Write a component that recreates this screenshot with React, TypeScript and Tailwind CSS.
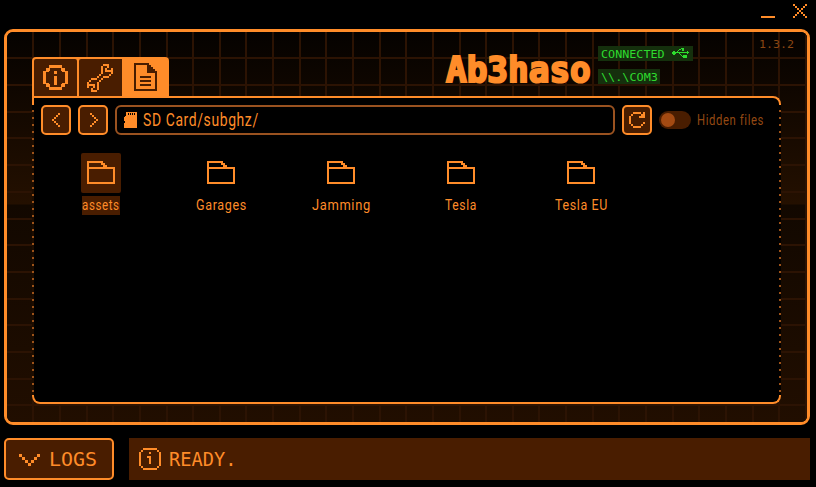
import { useLayoutEffect, useRef, useState, type ReactNode } from "react";

/* Text squeezed or stretched horizontally to fill the width of its box. */
function Fit({ className, children }: { className: string; children: ReactNode }) {
  const box = useRef<HTMLDivElement>(null);
  const text = useRef<HTMLSpanElement>(null);
  const [scale, setScale] = useState(1);
  useLayoutEffect(() => {
    if (box.current && text.current) setScale(box.current.clientWidth / text.current.offsetWidth);
  }, []);
  return (
    <div ref={box} className={`shrink-0 whitespace-pre ${className}`}>
      <span ref={text} className="inline-block origin-left" style={{ transform: `scaleX(${scale})` }}>
        {children}
      </span>
    </div>
  );
}

/* Bitmap icon: every # is one square cell. */
function Pixels({ rows, cell = 2, className = "" }: { rows: string[]; cell?: number; className?: string }) {
  const w = rows[0].length;
  return (
    <svg width={w * cell} height={rows.length * cell} viewBox={`0 0 ${w} ${rows.length}`} shapeRendering="crispEdges" fill="currentColor" className={`shrink-0 ${className}`}>
      {rows.flatMap((r, y) => r.split("").map((c, x) => (c === "#" ? <rect key={`${x}-${y}`} x={x} y={y} width="1" height="1" /> : null)))}
    </svg>
  );
}

const WRENCH = [
  "........###..",
  ".......#..#..",
  ".......#.#..#",
  ".......#.####",
  ".......#....#",
  "......#....#.",
  ".....#..###..",
  "..###..#.....",
  ".#....#......",
  "#....#.......",
  "####.#.......",
  "#..#.#.......",
  "..#..#.......",
  "..###........",
];
const LEFT = ["...#", "..#.", ".#..", "#...", ".#..", "..#.", "...#"];
const RIGHT = ["#...", ".#..", "..#.", "...#", "..#.", ".#..", "#..."];
const DOWN = ["#.....#", ".#...#.", "..#.#..", "...#..."];
const CLOSE = ["#.....#", ".#...#.", "..#.#..", "...#...", "..#.#..", ".#...#.", "#.....#"];
const REFRESH = ["..####.#", ".#....##", "#....###", "#.......", "#.......", "#......#", ".#....#.", "..####.."];
const INFO = [
  "..#######..",
  ".#.......#.",
  "#....#....#",
  "#.........#",
  "#...##....#",
  "#....#....#",
  "#....#....#",
  "#....#....#",
  "#.........#",
  ".#.......#.",
  "..#######..",
];
const USB = [
  ".........###.....",
  ".......##.##.....",
  "......#...##.....",
  ".##..#.........#.",
  "#################",
  "####...#.......#.",
  ".##.....#........",
  ".........#.####..",
  "..........#####..",
  "...........####..",
];

function TabInfo() {
  return (
    <svg width="25" height="25" viewBox="0 0 25 25" fill="currentColor" shapeRendering="crispEdges">
      <path d="M6 0h13v3H6zM6 22h13v3H6zM0 6h3v13H0zM22 6h3v13h-3zM3 3h4v3H6v1H3zM18 3h4v4h-3V6h-1zM3 18h3v1h1v3H3zM19 18h3v4h-4v-3h1zM11 6h3v3h-3zM11 11h3v9h-3z" />
    </svg>
  );
}

function TabFile() {
  return (
    <svg width="23" height="28" viewBox="0 0 23 28" fill="currentColor" shapeRendering="crispEdges">
      <path d="M0 0h15v2h2v2h2v2h2v2h2v20H0zM2 2v24h19V10h-8V2z" fillRule="evenodd" />
      <path d="M6 13h11v2H6zM6 17h11v2H6zM6 21h11v2H6z" />
    </svg>
  );
}

function Folder() {
  return (
    <svg width="28" height="23" viewBox="0 0 28 23" fill="currentColor" shapeRendering="crispEdges">
      <path fillRule="evenodd" d="M0 0h16v2h2v2h2v2h8v17H0zM2 2v4h14V4h-2V2zM2 8v13h24V8z" />
    </svg>
  );
}

function SdCard() {
  return (
    <svg width="13" height="16" viewBox="0 0 13 16" fill="currentColor" shapeRendering="crispEdges">
      <path d="M2 0h11v16H0v-5h1V9H0V5h1V4h1zM4 1v2h1V1zM6 1v2h1V1zM8 1v2h1V1zM10 1v2h1V1z" fillRule="evenodd" />
    </svg>
  );
}

const LINES_X = Array.from({ length: 30 }, (_, i) => Math.round(25.3 + i * 26.64));
const LINES_Y = Array.from({ length: 14 }, (_, i) => Math.round(25.3 + i * 26.7));

const FOLDERS = [
  { name: "assets", w: "w-[38px]", selected: true },
  { name: "Garages", w: "w-[51px]" },
  { name: "Jamming", w: "w-[59px]" },
  { name: "Tesla", w: "w-[32px]" },
  { name: "Tesla EU", w: "w-[53px]" },
];

const SIDE_DOTS =
  "absolute top-[14px] bottom-[9px] w-[2px] bg-[repeating-linear-gradient(to_bottom,#9c5219_0px,#9c5219_2px,transparent_2px,transparent_7px)]";
const TOOL_BUTTON = "flex size-[30px] shrink-0 items-center justify-center rounded-[5px] border-2 border-[#ff8c29] bg-[#491d00]";

export default function App() {
  return (
    <div className="flex h-[487px] w-[816px] flex-col overflow-hidden bg-black font-[Roboto,sans-serif] text-[#ff8c29]">
      <div className="flex h-[29px] shrink-0 items-start justify-end gap-[18px] pt-1 pr-[9px]">
        <div className="mt-3 h-[2px] w-[14px] bg-[#ff8c29]" />
        <Pixels rows={CLOSE} />
      </div>

      <main className="relative isolate mx-1 mr-[6px] flex h-[396px] shrink-0 flex-col overflow-hidden rounded-[9px] border-[3px] border-[#ff8c29]">
        <div className="absolute inset-0 -z-10 bg-[linear-gradient(to_bottom,#050200_0px,#241000_172px,#120800_173px,#210e00_390px)]">
          <svg width="800" height="390" shapeRendering="crispEdges" fill="#2c1303">
            {LINES_X.map((x) => (
              <rect key={x} x={x} y="0" width="2" height="390" />
            ))}
            {LINES_Y.map((y) => (
              <rect key={y} x="0" y={y} width="800" height="2" />
            ))}
          </svg>
        </div>

        <header className="flex h-16 shrink-0 items-start pl-[25px] font-['DejaVu_Sans_Mono',monospace]">
          <nav className="mt-[25px] flex h-[39px] w-[137px] shrink-0 gap-[2px] overflow-hidden rounded-t-[4px] bg-[#ff8c29] pt-[2px] pl-[2px]">
            <div className="flex w-[43px] items-start justify-center rounded-t-[2px] bg-[#491d00] pt-[6px]">
              <TabInfo />
            </div>
            <div className="flex w-[43px] items-start rounded-tl-[2px] bg-[#491d00] pt-[5px] pl-2">
              <Pixels rows={WRENCH} />
            </div>
            <div className="flex flex-1 items-start pt-1 pl-[10px] text-[#491d00]">
              <TabFile />
            </div>
          </nav>
          <Fit className="mt-[16px] ml-[277px] h-[44px] w-[145px] text-[36px] leading-[44px] font-bold [-webkit-text-stroke:2.2px_#ff8c29]">Ab3haso</Fit>
          <div className="ml-[7px] flex flex-col items-start gap-2 pt-[14px] text-[11px] leading-[17px] text-[#2edb2e]">
            <div className="flex h-[15px] w-[95px] bg-[#15300d] pl-[3px]">
              <Fit className="w-[64px]">CONNECTED</Fit>
              <Pixels rows={USB} cell={1} className="mt-[2px] ml-[7px]" />
            </div>
            <div className="h-[15px] w-[62px] bg-[#15300d] pl-[3px]">
              <Fit className="w-[57px]">{"\\\\.\\COM3"}</Fit>
            </div>
          </div>
          <Fit className="mt-[5px] ml-[66px] w-[35px] text-[11px] leading-[15px] text-[#8a4614]">1.3.2</Fit>
        </header>

        <section className="relative ml-[25px] flex h-[308px] w-[749px] shrink-0 flex-col rounded-r-[8px] rounded-bl-[8px] bg-black px-[9px] pt-[9px]">
          <div className="absolute inset-x-0 top-0 h-[9px] rounded-tr-[8px] border-x-2 border-t-2 border-[#ff8c29]" />
          <div className={`${SIDE_DOTS} left-0 bg-[#1d0d00]`} />
          <div className={`${SIDE_DOTS} right-0`} />
          <div className="absolute inset-x-0 bottom-0 h-[9px] rounded-b-[8px] border-x-2 border-b-2 border-[#ff8c29]" />

          <div className="flex h-[30px] items-center gap-[7px]">
            <div className={TOOL_BUTTON}>
              <Pixels rows={LEFT} className="-ml-px" />
            </div>
            <div className={TOOL_BUTTON}>
              <Pixels rows={RIGHT} className="ml-px" />
            </div>
            <div className="flex h-[30px] w-[500px] shrink-0 items-center gap-[6px] rounded-[6px] border-2 border-[#9a5220] pl-[7px]">
              <SdCard />
              <Fit className="w-[116px] text-[18px] leading-[26px] tracking-[0.8px]">SD Card/subghz/</Fit>
            </div>
            <div className={TOOL_BUTTON}>
              <Pixels rows={REFRESH} className="-ml-px" />
            </div>
            <div className="h-[18px] w-8 shrink-0 rounded-full bg-[#491d00] p-[2px]">
              <div className="size-[14px] rounded-full bg-[#a34a12]" />
            </div>
            <Fit className="-ml-px w-[67px] text-[15px] leading-5 tracking-[0.8px] text-[#944913]">Hidden files</Fit>
          </div>

          <div className="mt-[18px] flex">
            {FOLDERS.map((f) => (
              <div key={f.name} className="flex w-[120px] flex-col items-center">
                <div className={`flex size-10 items-start justify-center rounded-[2px] pt-2 ${f.selected ? "bg-[#491d00]" : ""}`}>
                  <Folder />
                </div>
                <Fit className={`mt-[3px] h-[19px] text-[15.5px] leading-[18px] tracking-[0.8px] ${f.w} ${f.selected ? "bg-[#491d00]" : ""}`}>{f.name}</Fit>
              </div>
            ))}
          </div>
        </section>
      </main>

      <footer className="mt-[13px] flex h-[42px] shrink-0 gap-[15px] pr-[6px] pl-1 font-['DejaVu_Sans_Mono',monospace] text-[19.5px] leading-[38px]">
        <div className="flex w-[110px] shrink-0 items-center rounded-[5px] border-2 border-[#ff8c29] bg-[#491d00] pl-[13px]">
          <Pixels rows={DOWN} cell={3} className="mt-[2px]" />
          <Fit className="ml-[9px] w-[48px] pt-[2px]">LOGS</Fit>
        </div>
        <div className="flex flex-1 items-center bg-[#491d00] pl-[10px]">
          <Pixels rows={INFO} />
          <Fit className="ml-[8px] w-[67px] pt-[2px]">READY.</Fit>
        </div>
      </footer>
    </div>
  );
}
